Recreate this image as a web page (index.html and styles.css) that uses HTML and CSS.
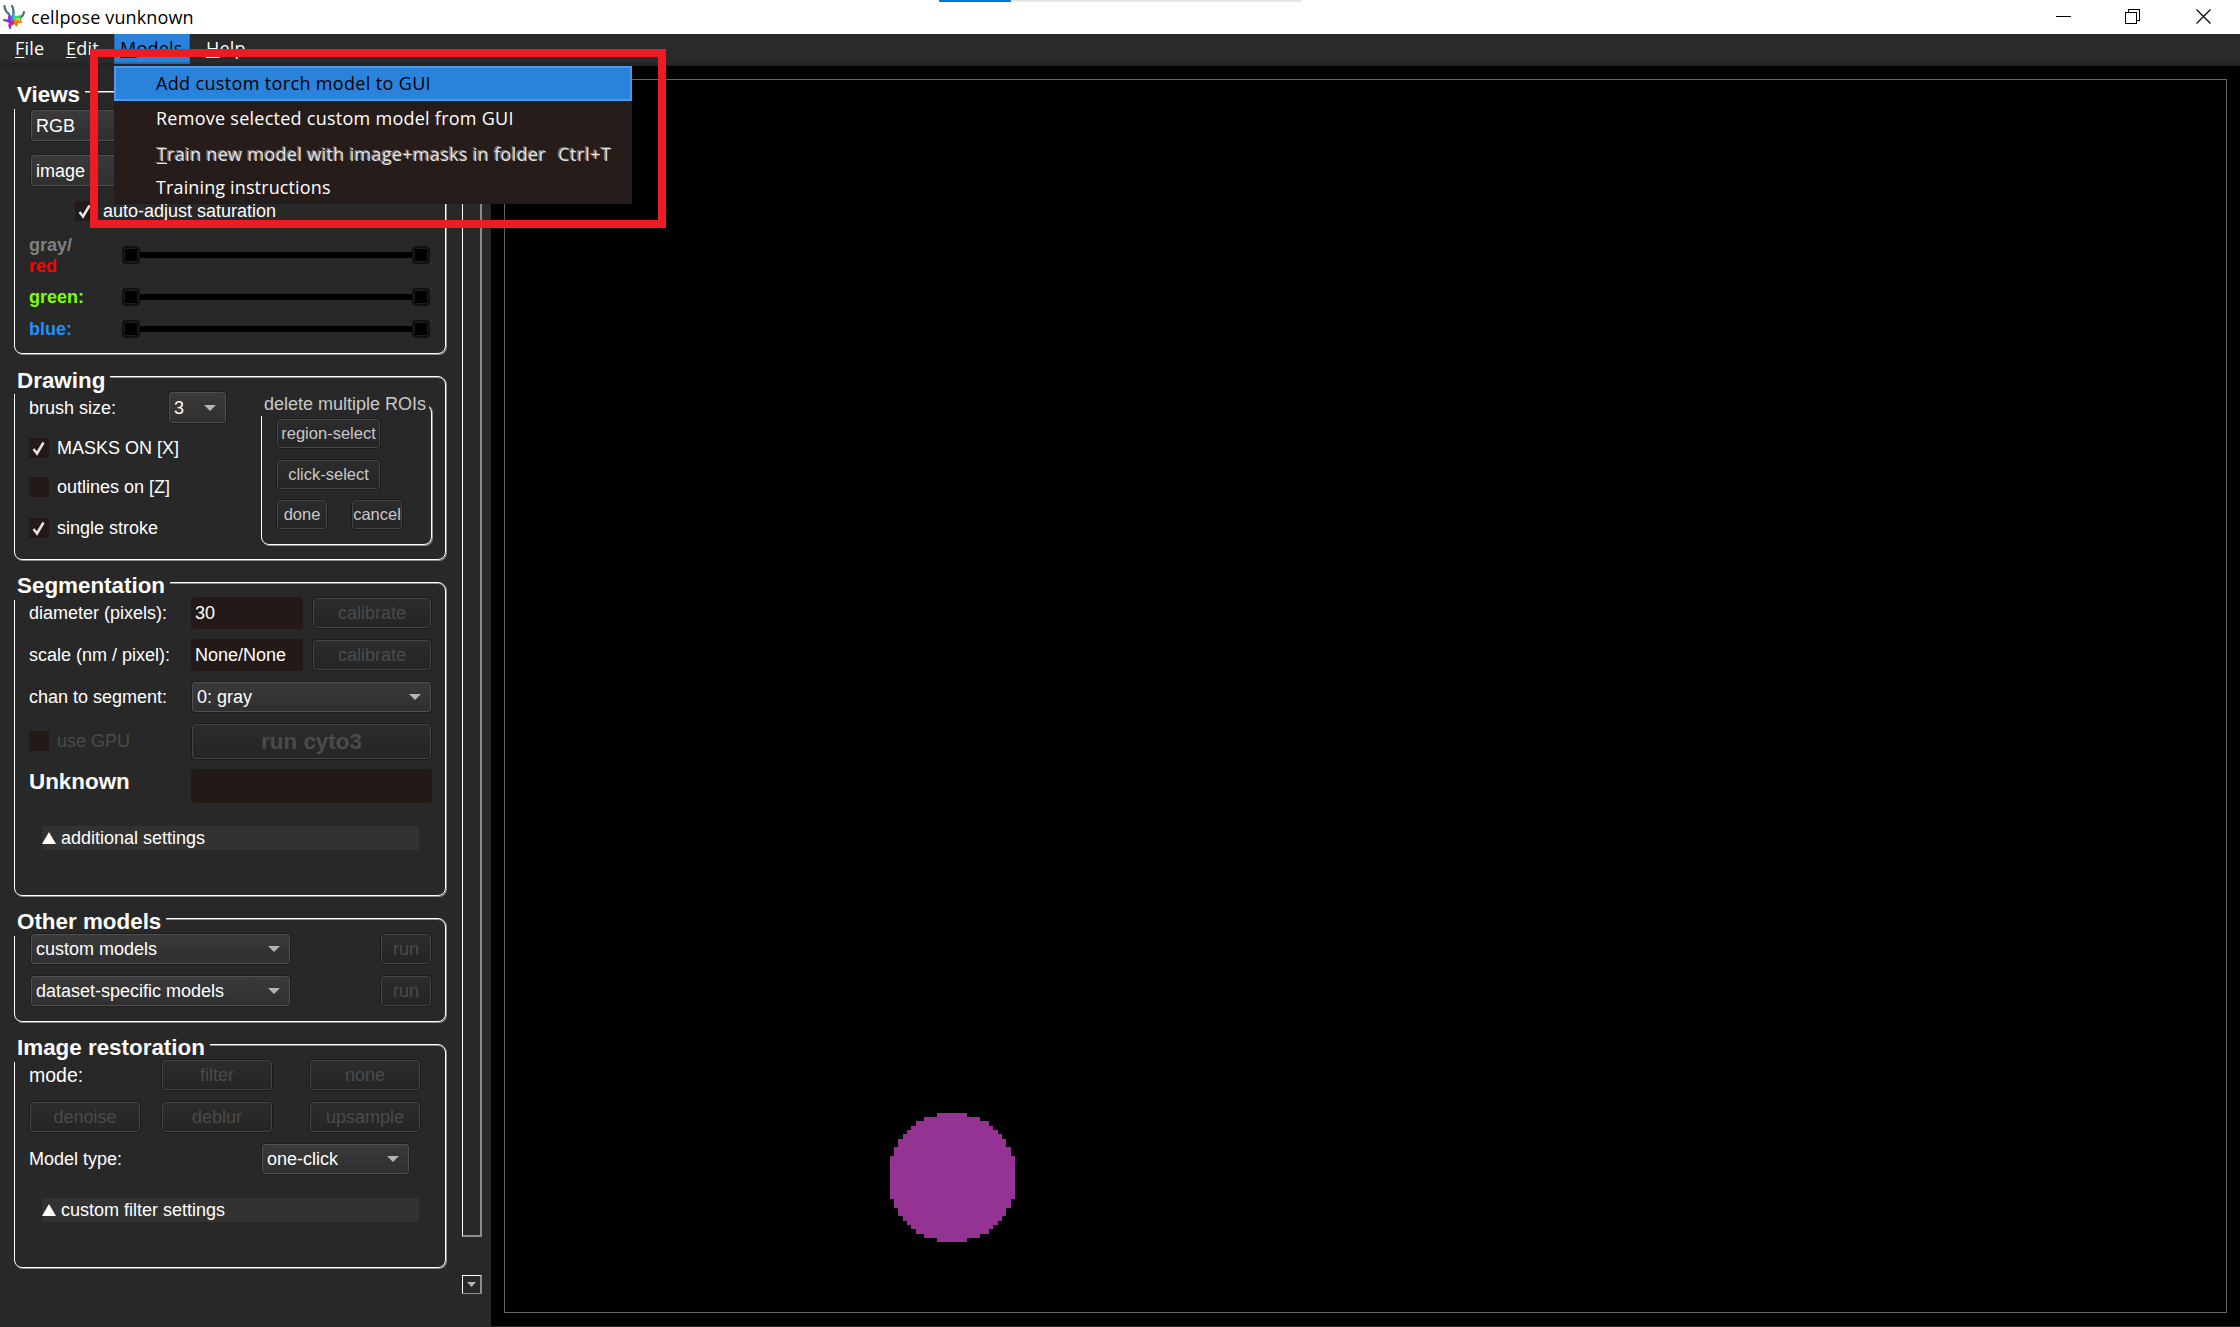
FILE: index.html
```html
<!DOCTYPE html>
<html lang="en">
<head>
<meta charset="utf-8">
<title>cellpose vunknown</title>
<link rel="stylesheet" href="styles.css">
</head>
<body>
<header class="titlebar">
  <svg class="logo" width="24" height="26" viewBox="0 0 24 26">
    <defs>
      <linearGradient id="warm" x1="0" y1="0.3" x2="1" y2="0.4">
        <stop offset="0" stop-color="#d21cf0"/><stop offset=".35" stop-color="#6a3cf0"/><stop offset=".55" stop-color="#20d0c0"/><stop offset=".75" stop-color="#49e03a"/><stop offset="1" stop-color="#3f9a58"/>
      </linearGradient>
    </defs>
    <path d="M2.500 2 Q3 7 6 9 L9 14 M10 2 Q12 5 11.500 13 M22 8 Q21 13 17 14 M2 16 L8 17 M9 18 L8 24" fill="none" stroke="#43706f" stroke-width="2.200" stroke-linecap="round"/>
    <path d="M6 12 L9 12.500 L11 9 L14 12 L20 11 L19 15 L20 19 L16 19 L15 23 L12 20 L9 21 L8 24 L6 22 L7 19 L2 17 L6 15 Z" fill="url(#warm)"/>
    <path d="M12 16 L18 16 L20 19 L16 19 L15 23 L12 20 Z" fill="#ff7a1a"/>
    <path d="M12 16 L7 18 L7 23 L12 20 Z" fill="#f0167c"/>
    <path d="M13 15 L18 14 L18 17 Z" fill="#d8e52c"/>
  </svg>
  <span class="app-name">cellpose vunknown</span>
  <div class="progress"><div class="progress-fill"></div></div>
  <svg class="win-buttons" width="160" height="34" viewBox="0 0 160 34" fill="none" stroke="#000" shape-rendering="crispEdges">
    <path d="M6 16.5H21"/>
    <path d="M75.500 12.500H86.500V23.500H75.500ZM78.500 12V9.500H89.500V20.500H87"/>
    <path d="M146.500 9.500L160.500 23.500M160.500 9.500L146.500 23.500" shape-rendering="auto" stroke-width="1.200"/>
  </svg>
</header>
<nav class="menubar">
  <span class="menu file"><u>F</u>ile</span><span class="menu edit"><u>E</u>dit</span><span class="menu models"><u>M</u>odels</span><span class="menu help"><u>H</u>elp</span>
</nav>
<main class="workspace">
  <aside class="sidebar">
    <div class="groups">
      <section class="group views">
        <h2 class="group-title">Views</h2>
        <div class="combo wide">RGB</div>
        <div class="combo wide second">image</div>
        <label class="check auto"><span class="box"><svg class="tick" viewBox="0 0 20 20"><path d="M4.500 11 L8 15.500 L14.500 4.500"/></svg></span>auto-adjust saturation</label>
        <div class="slider-row tall"><span class="chan"><span class="gray">gray/</span><br><span class="red">red</span></span><div class="slider"><i></i><i></i></div></div>
        <div class="slider-row mid"><span class="chan green">green:</span><div class="slider"><i></i><i></i></div></div>
        <div class="slider-row"><span class="chan blue">blue:</span><div class="slider"><i></i><i></i></div></div>
      </section>

      <section class="group drawing">
        <h2 class="group-title">Drawing</h2>
        <div class="columns">
          <div class="brush-col">
            <div class="row brush"><span>brush size:</span><div class="combo size">3<b class="arrow"></b></div></div>
            <label class="check c1"><span class="box"><svg class="tick" viewBox="0 0 20 20"><path d="M4.500 11 L8 15.500 L14.500 4.500"/></svg></span>MASKS ON [X]</label>
            <label class="check c2"><span class="box"></span>outlines on [Z]</label>
            <label class="check c3"><span class="box"><svg class="tick" viewBox="0 0 20 20"><path d="M4.500 11 L8 15.500 L14.500 4.500"/></svg></span>single stroke</label>
          </div>
          <div class="group rois">
            <h3 class="rois-title">delete multiple ROIs</h3>
            <div class="btn small long">region-select</div>
            <div class="btn small long">click-select</div>
            <div class="pair"><div class="btn small">done</div><div class="btn small">cancel</div></div>
          </div>
        </div>
      </section>

      <section class="group segmentation">
        <h2 class="group-title">Segmentation</h2>
        <div class="seg-grid">
          <span>diameter (pixels):</span><div class="input">30</div><div class="btn off">calibrate</div>
          <span>scale (nm / pixel):</span><div class="input">None/None</div><div class="btn off">calibrate</div>
          <span>chan to segment:</span><div class="combo span">0: gray<b class="arrow"></b></div>
          <label class="check off"><span class="box"></span>use GPU</label><div class="btn off span run">run cyto3</div>
          <span class="unknown">Unknown</span><div class="input span"></div>
        </div>
        <div class="collapse"><svg width="14" height="12"><path d="M7 0L14 12H0Z" fill="#fff"/></svg>additional settings</div>
      </section>

      <section class="group other">
        <h2 class="group-title">Other models</h2>
        <div class="row between"><div class="combo model">custom models<b class="arrow"></b></div><div class="btn off r">run</div></div>
        <div class="row between"><div class="combo model">dataset-specific models<b class="arrow"></b></div><div class="btn off r">run</div></div>
      </section>

      <section class="group restoration">
        <h2 class="group-title">Image restoration</h2>
        <div class="res-grid">
          <span class="mode">mode:</span><div class="btn off">filter</div><div class="btn off">none</div>
          <div class="btn off">denoise</div><div class="btn off">deblur</div><div class="btn off">upsample</div>
        </div>
        <div class="row between type"><span>Model type:</span><div class="combo click">one-click<b class="arrow"></b></div></div>
        <div class="collapse"><svg width="14" height="12"><path d="M7 0L14 12H0Z" fill="#fff"/></svg>custom filter settings</div>
      </section>
    </div>
    <div class="scrollbar">
      <div class="track"></div>
      <div class="down"><svg width="9" height="5"><path d="M0 0H9L4.500 5Z" fill="#b4b4b4"/></svg></div>
    </div>
  </aside>
  <div class="canvas">
    <div class="frame">
      <svg class="mask" width="170" height="170" viewBox="0 0 510 510" shape-rendering="crispEdges"><path fill="#953394" d="M201 69H291V81H330V93H357V108H369V120H384V132H396V147H408V171H423V198H435V327H423V354H408V378H396V393H384V405H369V417H357V432H330V444H291V456H201V444H162V432H138V417H123V405H111V393H99V378H84V354H72V327H60V198H72V171H84V147H99V132H111V120H123V108H138V93H162V81H201Z"/></svg>
    </div>
  </div>
</main>
<div class="dropdown">
  <div class="item active"><span class="t1">Add custom torch model to GUI</span></div>
  <div class="item"><span class="t2">Remove selected custom model from GUI</span></div>
  <div class="item disabled"><span class="t3"><u>T</u>rain new model with image+masks in folder</span><span class="t5">Ctrl+T</span></div>
  <div class="item"><span class="t4">Training instructions</span></div>
</div>
<div class="highlight"></div>
</body>
</html>
```
FILE: styles.css
```css
* { box-sizing: border-box; }
body {
  margin: 0; width: 2240px; height: 1327px; overflow: hidden; position: relative;
  display: flex; flex-direction: column; background: #282828; color: #fff;
  font: 18px "Liberation Sans", Arial, sans-serif;
}
h2, h3 { margin: 0; }
u { text-decoration-thickness: 1px; text-underline-offset: 2px; }

/* window chrome */
.titlebar { height: 34px; background: #fff; color: #000; display: flex; position: relative; flex: none; }
.logo { margin: 4px 0 0 2px; }
.app-name { margin-left: 5px; font: 18px/34px "Open Sans", "Noto Sans", sans-serif; letter-spacing: 0.14px; }
.progress { position: absolute; left: 939px; top: 0; width: 362px; height: 2px; background: #e6e6e6; }
.progress-fill { width: 72px; height: 2px; background: #0078d7; }
.win-buttons { margin-left: auto; margin-right: 30px; overflow: visible; }

.menubar {
  height: 32px; flex: none; background: #2a2a2a; border-bottom: 3px solid #242424;
  display: flex; font: 18px/28px "Open Sans", "Noto Sans", sans-serif;
}
.menu { height: 30px; padding-left: 6px; letter-spacing: 0.2px; }
.menu.file { margin-left: 9px; width: 50px; }
.menu.edit { width: 55px; padding-left: 7px; }
.menu.models { width: 76px; background: #2a82da; color: #000; border: solid #2468ad; border-width: 0 1px 2px 1px; padding-left: 5px; }
.menu.help { width: 60px; padding-left: 16px; }

.workspace { flex: none; height: 1260px; display: flex; }
.sidebar { width: 491px; flex: none; display: flex; }
.groups { width: 447px; flex: none; padding-left: 14px; display: flex; flex-direction: column; }

/* group boxes */
.group {
  flex: none; width: 432px; border: 1px solid #fff; border-radius: 8px;
  box-shadow: 1px 1px 0 #8c8c8c, inset 0 1px 0 #8c8c8c;
}
.group-title {
  width: max-content; height: 27px; margin: -10px 0 0 -1px; padding: 0 5px 0 3px;
  background: #282828; font: bold 22.400px/25px "Liberation Sans", Arial, sans-serif;
}
.drawing .group-title { line-height: 27px; }
.views { margin-top: 25px; height: 263px; }
.drawing { margin-top: 22px; height: 184px; }
.segmentation { margin-top: 22px; height: 314px; }
.other { margin-top: 22px; height: 104px; }
.restoration { margin-top: 22px; height: 224px; }
.row { display: flex; line-height: 32px; }
.between { justify-content: space-between; padding: 0 13px 0 15px; }

/* controls */
.combo {
  height: 32px; line-height: 28px; padding: 0 10px 0 5px; border: 1px solid #1d1d1d; border-radius: 4px;
  box-shadow: inset 0 0 0 1px #505050; background: linear-gradient(#3a3a3a, #2f2f2f);
  display: flex; align-items: center; justify-content: space-between;
}
.arrow { width: 0; height: 0; border: solid transparent; border-width: 6px 6px 0; border-top-color: #b4b4b4; }
.btn {
  height: 32px; line-height: 30px; border: 1px solid #1b1b1b; border-radius: 4px;
  box-shadow: inset 0 0 0 1px #454545; background: linear-gradient(#2c2c2c, #252525);
  text-align: center; white-space: nowrap;
}
.btn.off { color: #4b4b4b; }
.input { height: 32px; line-height: 32px; padding-left: 4px; background: #231a18; border: 0; border-radius: 3px; }
.check { display: flex; align-items: center; height: 20px; line-height: 20px; white-space: nowrap; }
.check.off { color: #4b4b4b; }
.box { width: 20px; height: 20px; margin-right: 8px; background: #231a18; flex: none; }
.tick { display: block; width: 20px; height: 20px; fill: none; stroke: #e4e4e4; stroke-width: 2.500; }

/* views */
.wide { margin: 0 12px 0 15px; height: 33px; }
.wide.second { margin-top: 12px; }
.auto { margin: 14px 0 0 60px; height: 20px; }
.slider-row { display: flex; align-items: center; height: 32px; margin-left: 14px; }
.slider-row.tall { height: 44px; margin-top: 13px; }
.slider-row.mid { margin-top: 3px; }
.tall .slider { margin-top: -2px; }
.chan { width: 93px; font-weight: bold; line-height: 21px; }
.gray { color: #808080; } .red { color: #f00; } .green { color: #7fff00; } .blue { color: #1e90ff; }
.slider { width: 308px; height: 18px; display: flex; justify-content: space-between; background: linear-gradient(#000, #000) center / 290px 6px no-repeat; }
.slider i { width: 18px; height: 18px; background: #000; border: 2px solid #111; border-radius: 4px; box-shadow: inset 0 0 0 1px #1c1c1c; }

/* drawing */
.columns { display: flex; margin-top: -3px; }
.brush-col { width: 246px; padding-left: 14px; display: flex; flex-direction: column; }
.brush { justify-content: space-between; width: 198px; line-height: 34px; height: 33px; }
.size { width: 59px; height: 33px; }
.c1 { margin-top: 14px; } .c2 { margin-top: 19px; } .c3 { margin-top: 21px; }
.rois { width: 171px; height: 141px; margin-top: 13px; color: #c8c8c8; }
.rois-title { width: max-content; height: 20px; margin: -9px 0 2px -1px; padding: 0 3px; background: #282828; font-size: 18px; font-weight: normal; line-height: 16px; }
.small { height: 31px; width: 52px; margin-left: 14px; margin-bottom: 9.500px; font-size: 16.500px; line-height: 28px; }
.long { width: 105px; }
.pair { display: flex; }
.pair .btn + .btn { margin-left: 23px; }

/* segmentation */
.seg-grid { display: grid; grid-template-columns: 162px 121px 120px; row-gap: 10px; margin: -3px 0 0 14px; line-height: 32px; }
.seg-grid .input:not(.span) { width: 112px; }
.span { grid-column: 2 / 4; }
.seg-grid .run { height: 37px; font-size: 22.400px; font-weight: bold; line-height: 35px; }
.unknown { font-size: 22.400px; font-weight: bold; line-height: 24px; }
.seg-grid .input.span { height: 34px; margin-top: -1px; }
.seg-grid .check { height: 36px; }
.collapse { width: 377px; height: 24px; margin: 23px 0 0 27px; background: #323232; display: flex; align-items: center; gap: 5px; line-height: 24px; }

/* other models */
.other .row + .row { margin-top: 10px; }
.other .group-title + .row { margin-top: -3px; }
.model { width: 261px; }
.r { width: 52px; }

/* image restoration */
.res-grid { display: grid; grid-template-columns: 112px 112px 112px; column-gap: 20px; row-gap: 10px; margin: -3px 0 0 14px; }
.res-grid > :nth-child(3n) { margin-left: 16px; width: 112px; }
.mode { font-size: 19.500px; line-height: 33px; height: 32px; }
.type { margin-top: 10px; padding-left: 14px; padding-right: 35px; }
.click { width: 149px; }

/* scroll bar */
.scrollbar { padding-left: 15px; display: flex; flex-direction: column; }
.track { width: 20px; height: 1171px; border-left: 1px solid #fff; border-right: 2px solid #8c8c8c; border-bottom: 2px solid #8c8c8c; }
.down { width: 20px; height: 19px; margin-top: 38px; border: 1px solid #fff; border-right: 2px solid #8c8c8c; border-bottom-color: #8c8c8c; display: flex; justify-content: center; align-items: center; }

/* image view */
.canvas { flex: 1; background: #000; padding: 13px; }
.frame { width: 1723px; height: 1234px; border: 1px solid #646464; position: relative; }
.mask { position: absolute; left: 365px; top: 1010px; }

/* open menu */
.dropdown {
  position: absolute; left: 114px; top: 66px; width: 518px; height: 138px; background: #261d1a;
  border-right: 2px solid #1d1d1d; border-bottom: 2px solid #1d1d1d;
  font: 18px/35px "Open Sans", "Noto Sans", sans-serif; white-space: nowrap;
}
.item { height: 35px; padding-left: 42px; display: flex; }
.item:last-child { height: 31px; line-height: 32px; }
.item.active { width: 518px; background: #2a82da; border: 2px solid #4c9bea; padding-left: 40px; line-height: 31px; color: #000; }
.disabled { color: #e4e4e4; text-shadow: -1.500px -1px 0 #787878; line-height: 37px; padding-left: 43px; }
.t1 { letter-spacing: 0.350px; }
.t2 { letter-spacing: 0.260px; }
.t3 { letter-spacing: 0.330px; }
.t4 { letter-spacing: 0.130px; }
.t5 { margin-left: 12px; letter-spacing: 0.650px; }

/* callout */
.highlight { position: absolute; left: 90px; top: 49px; width: 576px; height: 179px; border: 8px solid #ed1c24; }
```
